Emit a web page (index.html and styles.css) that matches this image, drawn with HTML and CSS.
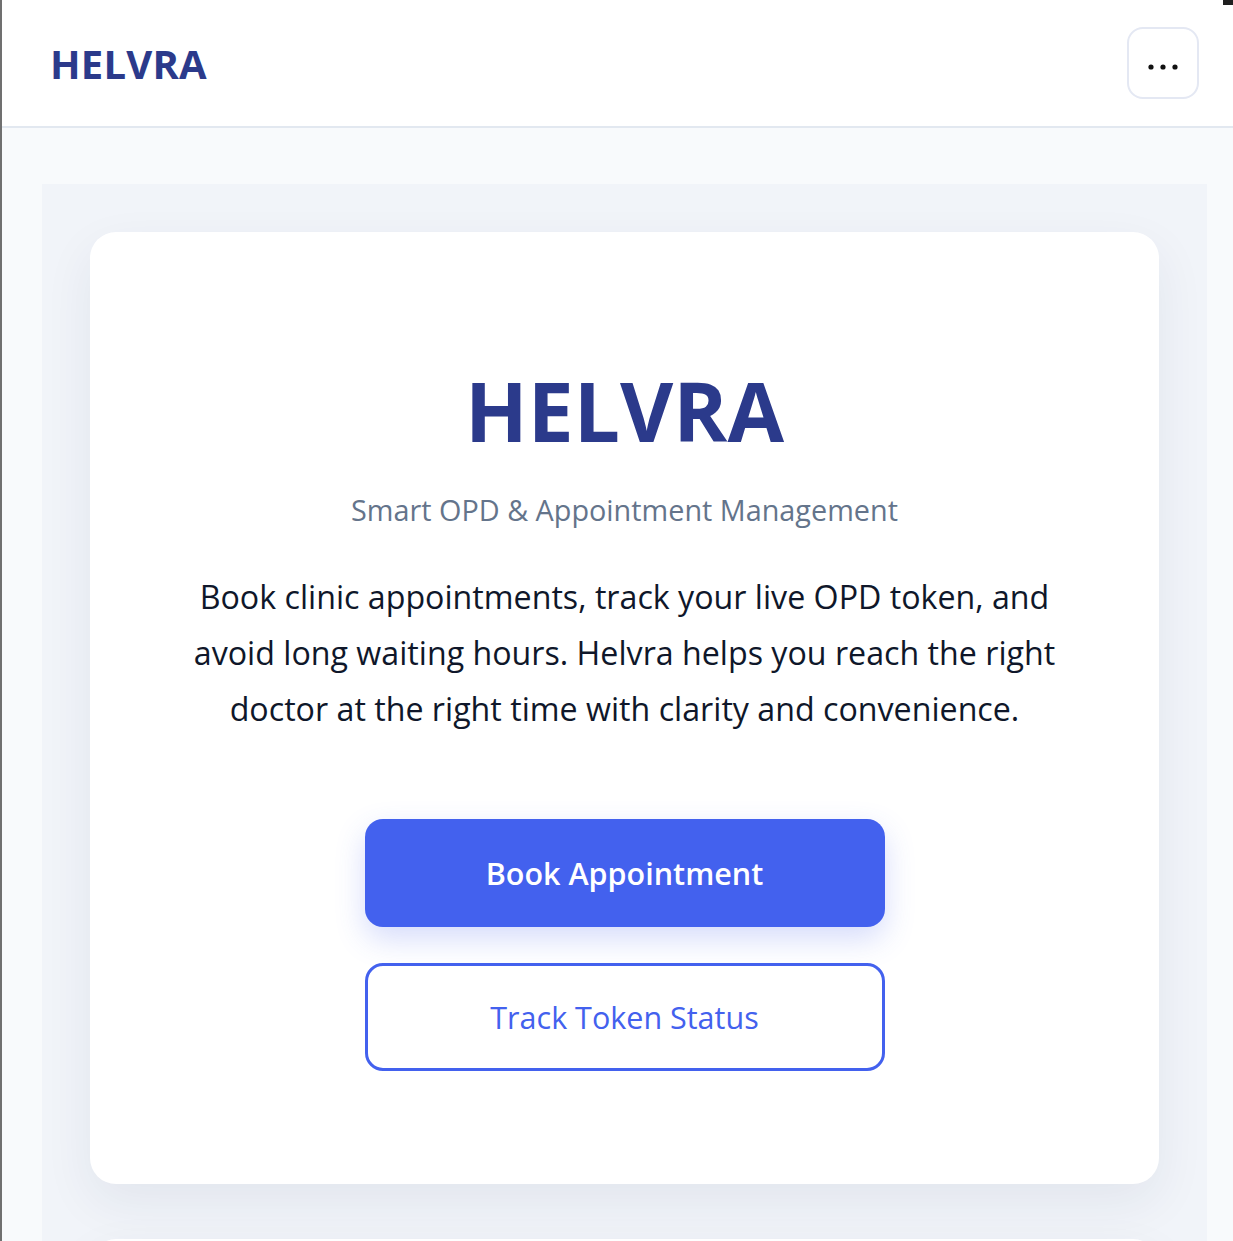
FILE: index.html
```html
<!DOCTYPE html>
<html lang="en">
<head>
  <meta charset="UTF-8">
  <title>Helvra - Smart OPD</title>
  <meta name="viewport" content="width=device-width, initial-scale=1.0">
  <link rel="stylesheet" href="styles.css">
</head>
<body>

  <div class="app">
    <header class="topbar">
      <div class="brand">HELVRA</div>
      <button class="menu-btn" aria-label="Menu">
        <svg width="32" height="8" viewBox="0 0 32 8">
          <circle cx="4" cy="4" r="2.6" fill="#111"/>
          <circle cx="16" cy="4" r="2.6" fill="#111"/>
          <circle cx="28" cy="4" r="2.6" fill="#111"/>
        </svg>
      </button>
    </header>

    <main class="main">
      <section class="panel">
        <div class="hero-card">
          <h1 class="hero-title">HELVRA</h1>
          <p class="hero-sub">Smart OPD &amp; Appointment Management</p>
          <p class="hero-text">Book clinic appointments, track your live OPD token, and avoid long waiting hours. Helvra helps you reach the right doctor at the right time with clarity and convenience.</p>

          <div class="hero-actions">
            <button class="btn btn-primary">Book Appointment</button>
            <button class="btn btn-outline">Track Token Status</button>
          </div>
        </div>

        <div class="hero-card next-card"></div>
      </section>
    </main>
  </div>

  <div class="corner-mark"></div>

</body>
</html>
```

FILE: styles.css
```css
html, body {
  margin: 0;
  padding: 0;
  overflow: hidden;
}

body {
  font-family: "Open Sans", "Noto Sans", Arial, sans-serif;
  background: #f8fafc;
  border-left: 2px solid #707070;
  color: #0f172a;
}

.app {
  width: 1245px;
}

.topbar {
  display: flex;
  align-items: center;
  justify-content: space-between;
  padding: 27px 48px;
  background: #ffffff;
  border-bottom: 2px solid #e2e8f0;
}

.brand {
  font-size: 40px;
  font-weight: 700;
  color: #2b3a8b;
  letter-spacing: 0.2px;
}

.menu-btn {
  width: 72px;
  height: 72px;
  display: flex;
  align-items: center;
  justify-content: center;
  background: #ffffff;
  border: 2px solid #e4e8f3;
  border-radius: 16px;
  cursor: pointer;
  padding: 7px 0 0;
}

.main {
  padding: 56px 40px 0;
}

.panel {
  display: flex;
  flex-direction: column;
  gap: 55px;
  padding: 48px;
  background: #f1f4f9;
}

.hero-card {
  background: #ffffff;
  border-radius: 26px;
  box-shadow: 0 18px 50px rgba(30, 41, 80, 0.07);
  padding: 133px 40px 113px;
  text-align: center;
}

.next-card {
  height: 300px;
  padding: 0;
}

.hero-title {
  margin: 0;
  font-size: 82px;
  line-height: 1.1;
  font-weight: 700;
  color: #2b3a8b;
}

.hero-sub {
  margin: 35px 0 0;
  font-size: 28.8px;
  color: #64748b;
}

.hero-text {
  max-width: 880px;
  margin: 40px auto 0;
  font-size: 32.2px;
  line-height: 56px;
  color: #0f172a;
}

.hero-actions {
  display: flex;
  flex-direction: column;
  align-items: center;
  gap: 36px;
  margin-top: 82px;
}

.btn {
  width: 520px;
  height: 108px;
  border-radius: 18px;
  font-family: inherit;
  font-size: 30.5px;
  cursor: pointer;
}

.btn-primary {
  background: #4361ee;
  color: #ffffff;
  font-weight: 600;
  border: none;
  box-shadow: 0 12px 30px rgba(67, 97, 238, 0.22);
}

.btn-outline {
  background: #ffffff;
  color: #4361ee;
  font-weight: 500;
  border: 3px solid #4361ee;
}

.corner-mark {
  position: fixed;
  top: 0;
  right: 0;
  width: 10px;
  height: 5px;
  background: #1f1f1f;
}
```
